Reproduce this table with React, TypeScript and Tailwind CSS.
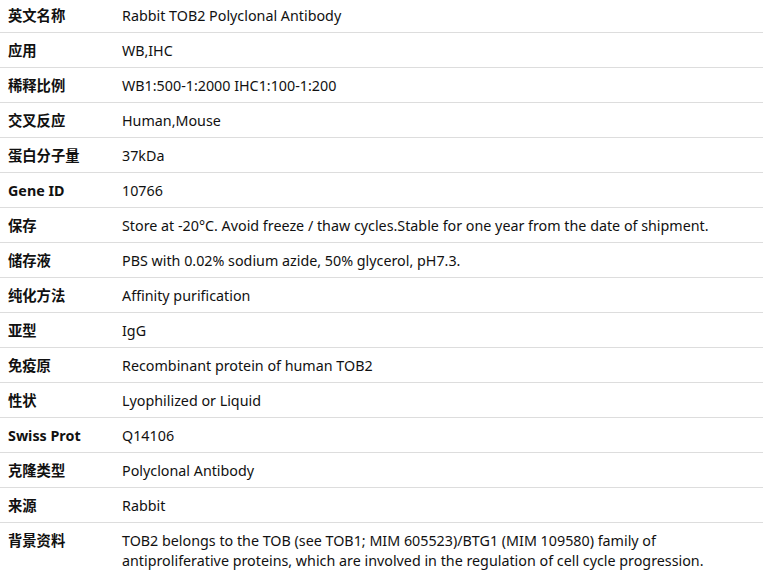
import React from 'react'

type Row = { label: string; value: React.ReactNode }

const rows: Row[] = [
    { label: '英文名称', value: 'Rabbit TOB2 Polyclonal Antibody' },
    { label: '应用', value: 'WB,IHC' },
    { label: '稀释比例', value: 'WB1:500-1:2000 IHC1:100-1:200' },
    { label: '交叉反应', value: 'Human,Mouse' },
    { label: '蛋白分子量', value: '37kDa' },
    { label: 'Gene ID', value: '10766' },
    {
        label: '保存',
        value: 'Store at -20°C. Avoid freeze / thaw cycles.Stable for one year from the date of shipment.',
    },
    { label: '储存液', value: 'PBS with 0.02% sodium azide, 50% glycerol, pH7.3.' },
    { label: '纯化方法', value: 'Affinity purification' },
    { label: '亚型', value: 'IgG' },
    { label: '免疫原', value: 'Recombinant protein of human TOB2' },
    { label: '性状', value: 'Lyophilized or Liquid' },
    { label: 'Swiss Prot', value: 'Q14106' },
    { label: '克隆类型', value: 'Polyclonal Antibody' },
    { label: '来源', value: 'Rabbit' },
    {
        label: '背景资料',
        value: (
            <>
                TOB2 belongs to the TOB (see TOB1; MIM 605523)/BTG1 (MIM 109580) family of
                <br />
                antiproliferative proteins, which are involved in the regulation of cell cycle progression.
            </>
        ),
    },
]

const App: React.FC = () => {
    return (
        <div className="w-[768px] h-[588px] overflow-hidden bg-white text-[14.3px] leading-[20px] text-[#111] font-['Noto_Sans','Noto_Sans_CJK_SC',sans-serif]">
            <div className="w-[763px] -mt-[2px]">
                {rows.map((row, i) => (
                    <div
                        key={i}
                        className={`flex pt-[8px] pb-[6px] ${
                            i < rows.length - 1 ? 'border-b border-[#dddddd]' : ''
                        }`}
                    >
                        <div className="w-[122px] shrink-0 pl-[8px] font-bold">
                            {row.label}
                        </div>
                        <div className="flex-1">{row.value}</div>
                    </div>
                ))}
            </div>
        </div>
    )
}

export default App
